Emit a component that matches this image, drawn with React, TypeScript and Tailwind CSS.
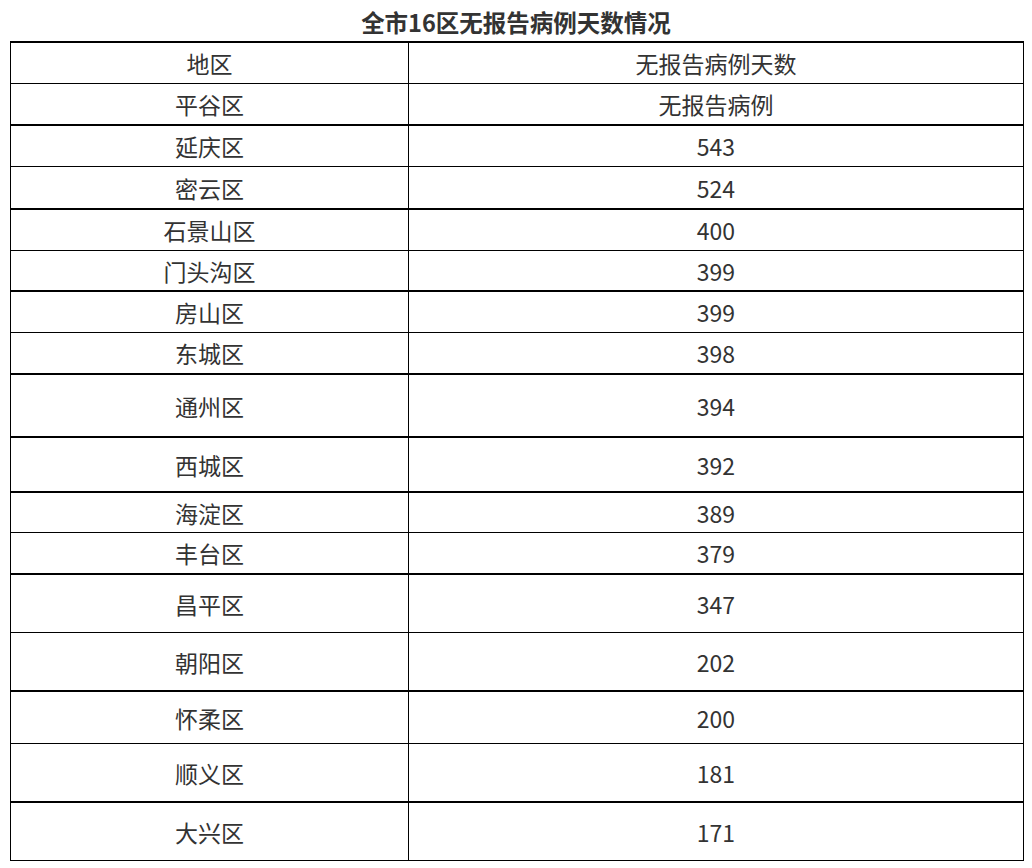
import React from "react";

type Row = { name: string; value: string; h: number; thick: boolean };

const rows: Row[] = [
  { name: "地区", value: "无报告病例天数", h: 42, thick: true },
  { name: "平谷区", value: "无报告病例", h: 41, thick: false },
  { name: "延庆区", value: "543", h: 42, thick: true },
  { name: "密云区", value: "524", h: 42, thick: false },
  { name: "石景山区", value: "400", h: 42, thick: true },
  { name: "门头沟区", value: "399", h: 40, thick: false },
  { name: "房山区", value: "399", h: 42, thick: true },
  { name: "东城区", value: "398", h: 41, thick: false },
  { name: "通州区", value: "394", h: 63, thick: true },
  { name: "西城区", value: "392", h: 55, thick: true },
  { name: "海淀区", value: "389", h: 41, thick: true },
  { name: "丰台区", value: "379", h: 41, thick: false },
  { name: "昌平区", value: "347", h: 59, thick: true },
  { name: "朝阳区", value: "202", h: 58, thick: false },
  { name: "怀柔区", value: "200", h: 53, thick: true },
  { name: "顺义区", value: "181", h: 58, thick: false },
  { name: "大兴区", value: "171", h: 59, thick: true },
];

export default function App() {
  return (
    <div
      className="w-[1032px] h-[868px] bg-white text-[#333]"
      style={{ fontFamily: '"Noto Sans CJK SC", "Noto Sans", sans-serif' }}
    >
      <div className="h-[41px] pt-[5px] flex items-center justify-center">
        <span className="text-[23.5px] font-bold leading-none">全市16区无报告病例天数情况</span>
      </div>
      <div className="ml-[10px] w-[1014px] border-l border-r border-b border-black flex flex-col">
        {rows.map((r, i) => (
          <div
            key={i}
            className={`flex border-black ${r.thick ? "border-t-2" : "border-t"}`}
            style={{ height: r.h }}
          >
            <div className="w-[398px] border-r border-black flex items-center justify-center pt-[1px] text-[23px] leading-none">
              {r.name}
            </div>
            <div className="flex-1 flex items-center justify-center pt-[1px] text-[23px] leading-none">
              {r.value}
            </div>
          </div>
        ))}
      </div>
    </div>
  );
}
